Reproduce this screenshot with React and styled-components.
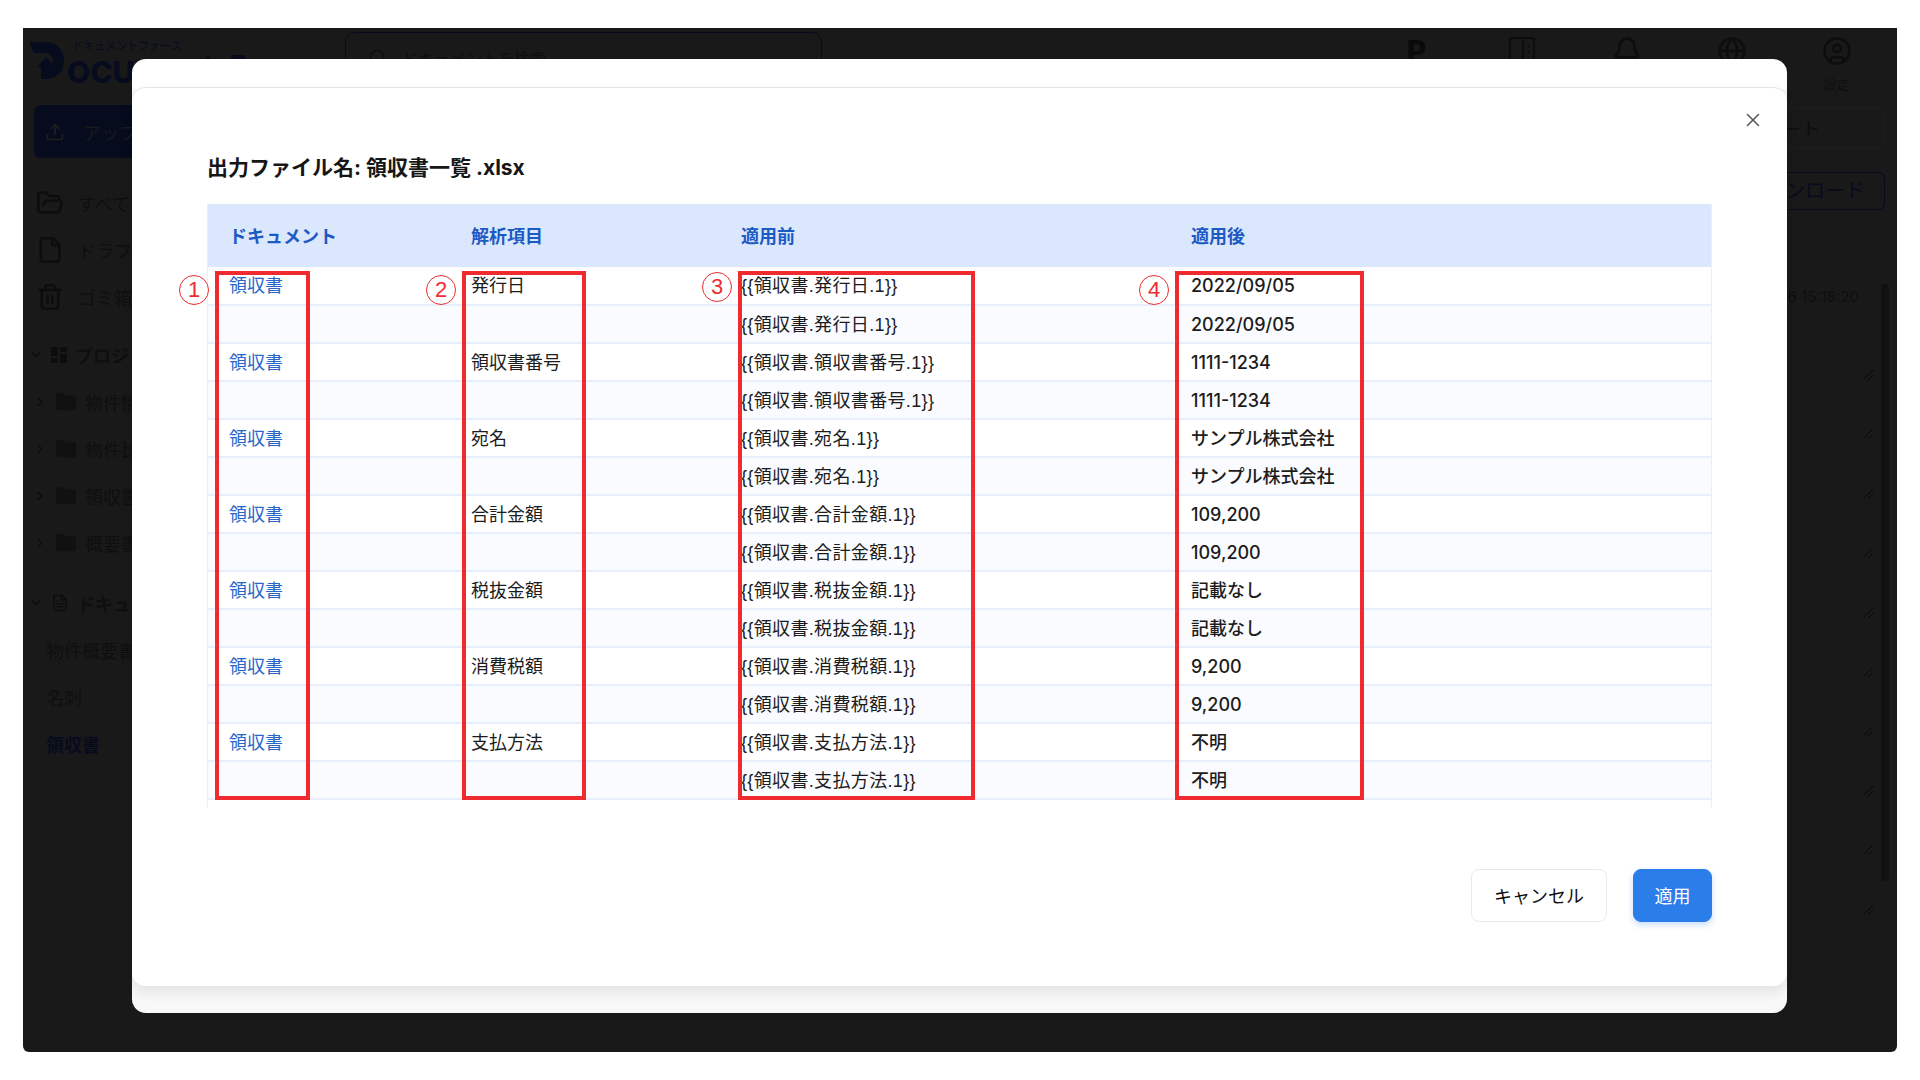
import React from "react";
import styled, { createGlobalStyle } from "styled-components";
import {
  FolderOpen, File, Trash2, ChevronDown, ChevronRight, Folder, FileText, Search, Bell, Globe, CircleUser, X, Upload,
} from "lucide-react";

const FONT = `Inter, "Noto Sans CJK JP", "Noto Sans", sans-serif`;
const DIM = "#0f0f0f";
const NAVY = "#060c1e";
const RED = "#ef2b30";

const Global = createGlobalStyle`
  html, body { margin: 0; padding: 0; background: #fff; }
  body { font-family: ${FONT}; }
  * { box-sizing: border-box; }
`;

const Page = styled.div`
  width: 1920px;
  height: 1080px;
  padding: 28px 23px;
  background: #fff;
  overflow: hidden;
`;

const Screen = styled.div`
  position: relative;
  width: 1874px;
  height: 1024px;
  background: #191919;
  border-radius: 0 0 6px 6px;
  overflow: hidden;
  display: flex;
  flex-direction: column;
  color: ${DIM};
`;

const Header = styled.header`
  height: 72px;
  flex: none;
  display: flex;
  padding: 4px 0 0 6px;
`;

const Logo = styled.div`
  position: relative;
  width: 316px;
  height: 52px;
  flex: none;
  color: ${NAVY};
`;

const LogoKana = styled.span`
  position: absolute;
  left: 43px;
  top: 7px;
  font-size: 11px;
  line-height: 14px;
  white-space: nowrap;
`;

const LogoWord = styled.span`
  position: absolute;
  left: ${(p) => p.$left}px;
  top: ${(p) => p.$top}px;
  font-size: 30px;
  line-height: 40px;
  font-weight: 800;
  white-space: nowrap;
`;

const SearchBox = styled.div`
  width: 477px;
  height: 52px;
  flex: none;
  border: 1px solid ${NAVY};
  border-radius: 10px;
  display: flex;
  align-items: center;
  gap: 14px;
  padding: 0 22px;
  font-size: 16px;
  color: ${DIM};
`;

const HeaderIcons = styled.div`
  margin-left: auto;
  display: flex;
  padding-right: 8px;
`;

const HeaderItem = styled.div`
  width: 105px;
  display: flex;
  flex-direction: column;
  align-items: center;
  gap: 10px;
  padding-top: 4px;
  font-size: 13px;
  line-height: 16px;
  color: ${DIM};
`;

const ParkingMark = styled.span`
  height: 30px;
  font-size: 30px;
  line-height: 30px;
  font-weight: 800;
  color: #0a0a0a;
`;

const Body = styled.div`
  flex: 1;
  display: flex;
  min-height: 0;
`;

const Sidebar = styled.aside`
  width: 310px;
  flex: none;
  padding: 5px 0 0 6px;
  display: flex;
  flex-direction: column;
`;

const UploadButton = styled.div`
  width: 285px;
  height: 53px;
  margin: 0 0 21px 5px;
  background: ${NAVY};
  border-radius: 7px;
  display: flex;
  align-items: center;
  gap: 18px;
  padding-left: 11px;
  font-size: 18px;
  color: #1a1a1a;
`;

const NavGroup = styled.div`
  display: flex;
  flex-direction: column;
  margin-bottom: ${(p) => p.$after ?? 13}px;
`;

const NavRow = styled.div`
  height: 47px;
  display: flex;
  align-items: center;
  gap: ${(p) => p.$gap || 14}px;
  padding-left: ${(p) => p.$pad || 0}px;
  font-size: 18px;
  font-weight: ${(p) => (p.$bold ? 700 : 400)};
  color: ${(p) => p.$color || DIM};
  white-space: nowrap;
`;

const Main = styled.main`
  flex: 1;
  display: flex;
  flex-direction: column;
  align-items: flex-end;
  padding: 8px 12px 0 0;
  min-width: 0;
`;

const TemplateTab = styled.div`
  width: 240px;
  height: 40px;
  border: 1px solid #1e1e1e;
  border-radius: 8px;
  display: flex;
  align-items: center;
  justify-content: flex-end;
  padding-right: 63px;
  font-size: 20px;
  color: ${DIM};
  white-space: nowrap;
`;

const DownloadButton = styled.div`
  width: 240px;
  height: 38px;
  margin-top: 24px;
  border: 1px solid ${NAVY};
  border-radius: 6px;
  display: flex;
  align-items: center;
  justify-content: flex-end;
  padding: 0 19px 3px 0;
  font-size: 20px;
  color: ${NAVY};
  white-space: nowrap;
`;

const TimeStamp = styled.div`
  margin-top: 76px;
  margin-right: 26px;
  font-size: 15px;
  line-height: 22px;
  color: ${DIM};
  white-space: nowrap;
`;

const MarkList = styled.div`
  margin-top: 62px;
  margin-right: 12px;
  display: flex;
  flex-direction: column;
  gap: 49.4px;
`;

const ScrollThumb = styled.div`
  position: absolute;
  left: 1858px;
  top: 256px;
  width: 8px;
  height: 597px;
  border-radius: 4px;
  background: #111;
`;

const Modal = styled.div`
  position: absolute;
  left: 109px;
  top: 31px;
  width: 1655px;
  height: 954px;
  border-radius: 14px;
  padding-top: 28px;
  background: linear-gradient(#fff 0 30px, #f8f8f8 30px);
`;

const Card = styled.div`
  position: relative;
  height: 899px;
  background: #fff;
  border-radius: 14px;
  border-top: 1px solid #e4e5ea;
  box-shadow: 0 6px 14px rgba(0, 0, 0, 0.09);
  padding: 67px 75px 0;
  display: flex;
  flex-direction: column;
  color: #111;
`;

const CloseButton = styled.button`
  position: absolute;
  right: 23px;
  top: 21px;
  width: 22px;
  height: 22px;
  padding: 0;
  border: 0;
  background: none;
  color: #555;
  display: flex;
  align-items: center;
  justify-content: center;
`;

const Title = styled.h2`
  margin: 0 0 25px;
  height: 24px;
  font-size: 21px;
  line-height: 24px;
  font-weight: 700;
  color: #161616;
  white-space: nowrap;
  position: relative;
  top: 1px;
`;

const TableWrap = styled.div`
  position: relative;
  height: 603px;
  flex: none;
  border-left: 1px solid #e8effc;
  border-right: 1px solid #e8effc;
`;

const Table = styled.table`
  width: 100%;
  table-layout: fixed;
  border-collapse: collapse;
  font-size: 18px;
`;

const HeadCell = styled.th`
  height: 63px;
  padding: 0 0 2px 21px;
  background: #dbe7fd;
  color: #1c5ac4;
  font-size: 18px;
  font-weight: 700;
  text-align: left;
  white-space: nowrap;
`;

const Row = styled.tr`
  height: 38px;
  background: ${(p) => (p.$alt ? "#fafbfe" : "#fff")};
  border-bottom: 2px solid #e8effc;
`;

const Cell = styled.td`
  padding: 1px 0 0 21px;
  line-height: 22px;
  color: ${(p) => (p.$link ? "#2a66c9" : "#1c1c1c")};
  font-weight: ${(p) => p.$weight || 400};
  letter-spacing: ${(p) => p.$tracking || 0}px;
  white-space: nowrap;
`;

const Braces = styled.span`
  letter-spacing: 0.35px;
  font-family: "Liberation Sans", "Noto Sans CJK JP", sans-serif;
`;

const RedBox = styled.div`
  position: absolute;
  left: ${(p) => p.$left}px;
  top: 67px;
  width: ${(p) => p.$width}px;
  height: 529px;
  border: 4px solid ${RED};
  pointer-events: none;
`;

const Callout = styled.span`
  position: absolute;
  left: ${(p) => p.$left}px;
  top: ${(p) => p.$top}px;
  width: 30px;
  height: 30px;
  border: 1px solid ${RED};
  border-radius: 50%;
  background: #fff;
  color: ${RED};
  font-family: "Liberation Sans", sans-serif;
  font-size: 22px;
  line-height: 28px;
  text-align: center;
`;

const Footer = styled.div`
  display: flex;
  justify-content: flex-end;
  gap: 26px;
  margin-top: 62px;
`;

const Button = styled.button`
  height: 53px;
  width: ${(p) => (p.$primary ? 79 : 136)}px;
  border-radius: 8px;
  border: 1px solid ${(p) => (p.$primary ? "#2b7de9" : "#e9e9ec")};
  background: ${(p) => (p.$primary ? "#2b7de9" : "#fff")};
  color: ${(p) => (p.$primary ? "#fff" : "#111")};
  box-shadow: ${(p) => (p.$primary ? "0 3px 6px rgba(43,125,233,.25)" : "none")};
  font-family: ${FONT};
  font-size: 18px;
  padding: 0 0 2px;
`;

const LogoMark = () => (
  <svg width="36" height="37" viewBox="0 0 36 37" style={{ position: "absolute", left: 0, top: 10 }}>
    <path
      d="M0 0H16C28 0 35 8 35 18.5C35 29 28 37 16 37H12V25H8L17 15L26 25H24C24 25 24 18 23 15C22 12 19 11 16 11H5Z"
      fill={NAVY}
    />
  </svg>
);

const LogoPeak = () => (
  <svg width="10" height="8" viewBox="0 0 10 8" style={{ position: "absolute", left: 174, top: 23 }}>
    <path d="M5 0L10 8H0Z" fill={NAVY} />
  </svg>
);

const BookMark = () => (
  <svg width="28" height="30" viewBox="0 0 28 30" fill="none" stroke="#0d0d0d" strokeWidth="2.2">
    <rect x="2" y="2" width="24" height="26" rx="1.5" />
    <path d="M15 2V28" />
    <circle cx="20.5" cy="10" r="1.2" fill="#0d0d0d" stroke="none" />
    <circle cx="20.5" cy="16" r="1.2" fill="#0d0d0d" stroke="none" />
  </svg>
);

const ResizeMark = () => (
  <svg width="10" height="10" viewBox="0 0 10 10" stroke="#070707" strokeWidth="1" style={{ display: "block" }}>
    <path d="M0 10L10 0M5 10L10 5" />
  </svg>
);

const GridMark = () => (
  <svg width="16" height="16" viewBox="0 0 16 16" fill="#0d0d0d">
    <rect x="0" y="0" width="7" height="9" rx="1" />
    <rect x="9" y="0" width="7" height="5" rx="1" />
    <rect x="0" y="11" width="7" height="5" rx="1" />
    <rect x="9" y="7" width="7" height="9" rx="1" />
  </svg>
);

const fields = [
  ["発行日", "2022/09/05"],
  ["領収書番号", "1111-1234"],
  ["宛名", "サンプル株式会社"],
  ["合計金額", "109,200"],
  ["税抜金額", "記載なし"],
  ["消費税額", "9,200"],
  ["支払方法", "不明"],
];

const rows = fields.flatMap(([name, value]) => [
  { key: `${name}-a`, name, value, first: true },
  { key: `${name}-b`, name, value, first: false },
]);

const boxes = [
  { left: 7, width: 95 },
  { left: 254, width: 124 },
  { left: 530, width: 237 },
  { left: 967, width: 189 },
];

const callouts = [
  { n: 1, left: -29, top: 71 },
  { n: 2, left: 218, top: 71 },
  { n: 3, left: 494, top: 68 },
  { n: 4, left: 931, top: 71 },
];

export default function App() {
  return (
    <Page>
      <Global />
      <Screen>
        <Header>
          <Logo>
            <LogoMark />
            <LogoKana>ドキュメントフォース</LogoKana>
            <LogoWord $left={38} $top={20}>OCUMENT</LogoWord>
            <LogoPeak />
            <LogoWord $left={200} $top={14}>F</LogoWord>
          </Logo>
          <SearchBox>
            <Search size={20} strokeWidth={2} />
            ドキュメントを検索
          </SearchBox>
          <HeaderIcons>
            <HeaderItem><ParkingMark>P</ParkingMark></HeaderItem>
            <HeaderItem><BookMark /></HeaderItem>
            <HeaderItem><Bell size={30} strokeWidth={2} color="#0d0d0d" /></HeaderItem>
            <HeaderItem><Globe size={30} strokeWidth={2} color="#0d0d0d" /></HeaderItem>
            <HeaderItem>
              <CircleUser size={30} strokeWidth={2} color="#0d0d0d" />
              設定
            </HeaderItem>
          </HeaderIcons>
        </Header>
        <Body>
          <Sidebar>
            <UploadButton>
              <Upload size={20} color="#1f1f1f" />
              アップロード
            </UploadButton>
            <NavGroup $after={11}>
              <NavRow $pad={7}><FolderOpen size={28} strokeWidth={2.2} color="#0d0d0d" />すべて</NavRow>
              <NavRow $pad={7}><File size={28} strokeWidth={2.2} color="#0d0d0d" />ドラフト</NavRow>
              <NavRow $pad={7}><Trash2 size={28} strokeWidth={2.2} color="#0d0d0d" />ゴミ箱</NavRow>
            </NavGroup>
            <NavGroup>
              <NavRow $gap={8} $bold><ChevronDown size={14} strokeWidth={3} color="#0d0d0d" /><GridMark />プロジェクト</NavRow>
              {["物件情報", "物件比較", "領収書", "概要書"].map((t) => (
                <NavRow key={t} $gap={8} $pad={4}>
                  <ChevronRight size={14} strokeWidth={2.5} color="#0d0d0d" />
                  <Folder size={22} fill="#111" color="#111" />
                  {t}
                </NavRow>
              ))}
            </NavGroup>
            <NavGroup>
              <NavRow $gap={8} $bold><ChevronDown size={14} strokeWidth={3} color="#0d0d0d" /><FileText size={18} color="#0d0d0d" />ドキュメント</NavRow>
              <NavRow $pad={17}>物件概要書</NavRow>
              <NavRow $pad={17}>名刺</NavRow>
              <NavRow $pad={17} $bold $color={NAVY}>領収書</NavRow>
            </NavGroup>
          </Sidebar>
          <Main>
            <TemplateTab>テンプレート</TemplateTab>
            <DownloadButton>ダウンロード</DownloadButton>
            <TimeStamp>2022/09/06 15:18:20</TimeStamp>
            <MarkList>
              {Array.from({ length: 10 }, (_, i) => <ResizeMark key={i} />)}
            </MarkList>
          </Main>
        </Body>
        <ScrollThumb />
        <Modal>
          <Card>
            <CloseButton aria-label="閉じる"><X size={22} strokeWidth={1.6} /></CloseButton>
            <Title>出力ファイル名: 領収書一覧 .xlsx</Title>
            <TableWrap>
              <Table>
                <colgroup>
                  <col style={{ width: 242 }} />
                  <col style={{ width: 270 }} />
                  <col style={{ width: 450 }} />
                  <col />
                </colgroup>
                <thead>
                  <tr>
                    <HeadCell>ドキュメント</HeadCell>
                    <HeadCell>解析項目</HeadCell>
                    <HeadCell>適用前</HeadCell>
                    <HeadCell>適用後</HeadCell>
                  </tr>
                </thead>
                <tbody>
                  {rows.map((r) => (
                    <Row key={r.key} $alt={!r.first}>
                      <Cell $link>{r.first ? "領収書" : ""}</Cell>
                      <Cell>{r.first ? r.name : ""}</Cell>
                      <Cell><Braces>{`{{領収書.${r.name}.1}}`}</Braces></Cell>
                      <Cell $weight={500}>{r.value}</Cell>
                    </Row>
                  ))}
                </tbody>
              </Table>
              {boxes.map((b) => <RedBox key={b.left} $left={b.left} $width={b.width} />)}
              {callouts.map((c) => <Callout key={c.n} $left={c.left} $top={c.top}>{c.n}</Callout>)}
            </TableWrap>
            <Footer>
              <Button>キャンセル</Button>
              <Button $primary>適用</Button>
            </Footer>
          </Card>
        </Modal>
      </Screen>
    </Page>
  );
}
